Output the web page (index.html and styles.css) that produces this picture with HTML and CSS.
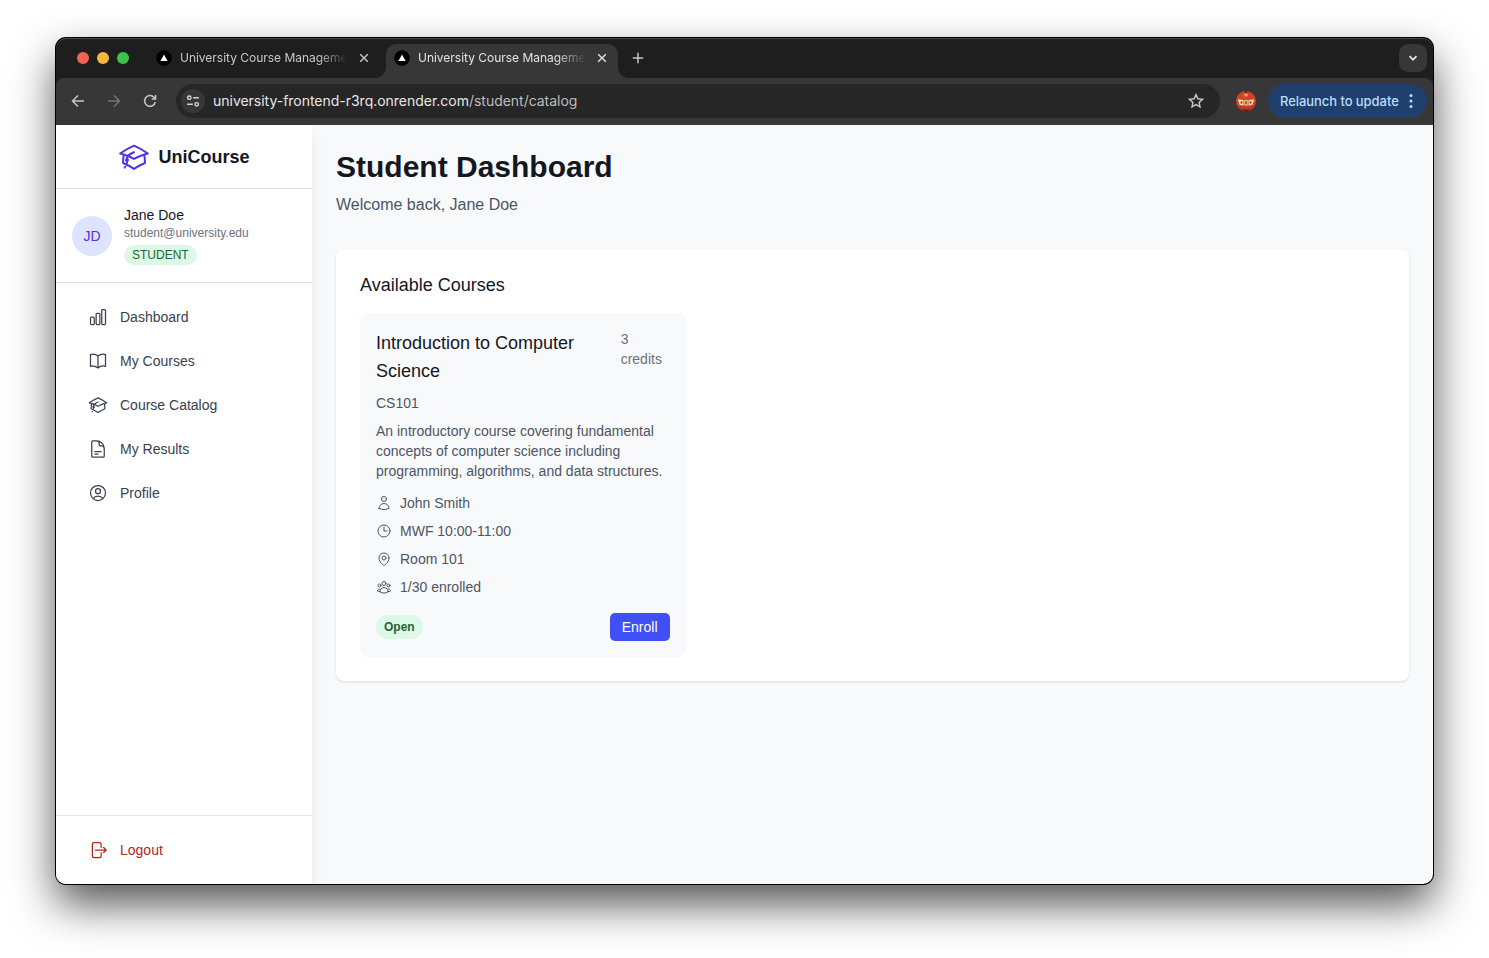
FILE: index.html
```html
<!DOCTYPE html>
<html lang="en">
<head>
<meta charset="utf-8">
<title>University Course Management</title>
<link rel="stylesheet" href="styles.css">
</head>
<body>
<svg class="sprite" aria-hidden="true">
  <symbol id="cap" viewBox="0 0 24 24"><path d="M4.26 10.147a60.438 60.438 0 0 0-.491 6.347A48.62 48.62 0 0 1 12 20.904a48.62 48.62 0 0 1 8.232-4.41 60.46 60.46 0 0 0-.491-6.347m-15.482 0a50.636 50.636 0 0 0-2.658-.813A59.906 59.906 0 0 1 12 3.493a59.903 59.903 0 0 1 10.399 5.84c-.896.248-1.783.52-2.658.814m-15.482 0A50.717 50.717 0 0 1 12 13.489a50.702 50.702 0 0 1 7.74-3.342M6.75 15a.75.75 0 1 0 0-1.5.75.75 0 0 0 0 1.5Zm0 0v-3.675A55.378 55.378 0 0 1 12 8.443m-7.007 11.55A5.981 5.981 0 0 0 6.75 15.75v-1.5"/></symbol>
  <symbol id="close" viewBox="0 0 10 10"><path d="M1.2 1.2 8.8 8.8M8.8 1.2 1.2 8.8"/></symbol>
  <symbol id="favicon" viewBox="0 0 16 16"><circle cx="8" cy="8" r="7.8" fill="#000"/><path d="M8 4.6 11.6 11H4.4Z" fill="#fff"/></symbol>
</svg>
<div class="window">
  <header class="tabs">
    <div class="lights"><i class="red"></i><i class="yellow"></i><i class="green"></i></div>
    <div class="tab">
      <svg class="favicon"><use href="#favicon"/></svg>
      <span class="tab-title">University Course Manageme</span>
      <svg class="tab-close"><use href="#close"/></svg>
    </div>
    <div class="tab active">
      <svg class="favicon"><use href="#favicon"/></svg>
      <span class="tab-title">University Course Manageme</span>
      <svg class="tab-close"><use href="#close"/></svg>
    </div>
    <svg class="plus" viewBox="0 0 12 12"><path d="M6 .8v10.4M.8 6h10.4"/></svg>
    <div class="tab-menu"><svg viewBox="0 0 10 10"><path d="m1.5 3.2 3.5 3.5 3.5-3.5"/></svg></div>
  </header>
  <div class="toolbar">
    <svg class="tool" viewBox="0 0 16 16"><path d="M14 8H2.5M8 2.5 2.5 8 8 13.5"/></svg>
    <svg class="tool dim" viewBox="0 0 16 16"><path d="M2 8h11.5M8 2.5 13.5 8 8 13.5"/></svg>
    <svg class="tool" viewBox="0 0 16 16"><path d="M13.3 9A5.4 5.4 0 1 1 12 4.3l1.4 1.5M13.6 2v4H9.7"/></svg>
    <div class="address">
      <div class="site"><svg viewBox="0 0 14 14"><circle cx="3.3" cy="3.7" r="1.7"/><path d="M7.2 3.7h5.6M1.2 10.3h5.6"/><circle cx="10.7" cy="10.3" r="1.7"/></svg></div>
      <span class="url"><b>university-frontend-r3rq.onrender.com</b>/student/catalog</span>
      <svg class="star" viewBox="0 0 16 16"><path d="m8 1.6 1.9 4.2 4.6.5-3.4 3.1.9 4.5L8 11.6l-4 2.3.9-4.5L1.5 6.3l4.6-.5Z"/></svg>
    </div>
    <svg class="profile" viewBox="0 0 20 20"><circle cx="10" cy="10" r="10" fill="#d5402b"/><path d="M1.5 15.5a10 10 0 0 0 17 0Z" fill="#c03524"/><path d="M5 18.6a10 10 0 0 0 10 0Z" fill="#5c201a"/><path d="M9 0h2v2.5H9Z" fill="#4a2418"/><circle cx="10" cy="4" r="1.8" fill="#f0ad35"/><path d="M1.8 8.5 7.5 9v5.5l-4-.7ZM18.2 8.5 12.5 9v5.5l4-.7Z" fill="#f7dfae"/><path d="M8.2 9h3.6v5.5H8.2Z" fill="#efbc83"/><path d="M4.5 10.5h2v2h-2ZM13.5 10.5h2v2h-2ZM9.3 10.3h1.4v3H9.3Z" fill="#8c3522"/></svg>
    <div class="relaunch"><span>Relaunch to update</span><svg viewBox="0 0 4 16"><circle cx="2" cy="2.5" r="1.5"/><circle cx="2" cy="8" r="1.5"/><circle cx="2" cy="13.5" r="1.5"/></svg></div>
  </div>
  <div class="app">
    <aside class="sidebar">
      <div class="brand"><svg class="icon brand-icon"><use href="#cap"/></svg><span>UniCourse</span></div>
      <div class="user">
        <div class="avatar">JD</div>
        <div class="user-info">
          <div class="user-name">Jane Doe</div>
          <div class="user-email">student@university.edu</div>
          <div class="role">STUDENT</div>
        </div>
      </div>
      <nav class="nav">
        <a class="nav-item"><svg class="icon" viewBox="0 0 24 24"><path d="M3 13.125C3 12.504 3.504 12 4.125 12h2.25c.621 0 1.125.504 1.125 1.125v6.75C7.5 20.496 6.996 21 6.375 21h-2.25A1.125 1.125 0 0 1 3 19.875v-6.75ZM9.75 8.625c0-.621.504-1.125 1.125-1.125h2.25c.621 0 1.125.504 1.125 1.125v11.25c0 .621-.504 1.125-1.125 1.125h-2.25a1.125 1.125 0 0 1-1.125-1.125V8.625ZM16.5 4.125c0-.621.504-1.125 1.125-1.125h2.25C20.496 3 21 3.504 21 4.125v15.75c0 .621-.504 1.125-1.125 1.125h-2.25a1.125 1.125 0 0 1-1.125-1.125V4.125Z"/></svg>Dashboard</a>
        <a class="nav-item"><svg class="icon" viewBox="0 0 24 24"><path d="M12 6.042A8.967 8.967 0 0 0 6 3.75c-1.052 0-2.062.18-3 .512v14.25A8.987 8.987 0 0 1 6 18c2.305 0 4.408.867 6 2.292m0-14.25a8.966 8.966 0 0 1 6-2.292c1.052 0 2.062.18 3 .512v14.25A8.987 8.987 0 0 0 18 18a8.967 8.967 0 0 0-6 2.292m0-14.25v14.25"/></svg>My Courses</a>
        <a class="nav-item"><svg class="icon"><use href="#cap"/></svg>Course Catalog</a>
        <a class="nav-item"><svg class="icon" viewBox="0 0 24 24"><path d="M19.5 14.25v-2.625a3.375 3.375 0 0 0-3.375-3.375h-1.5A1.125 1.125 0 0 1 13.5 7.125v-1.5a3.375 3.375 0 0 0-3.375-3.375H8.25m0 12.75h7.5m-7.5 3H12M10.5 2.25H5.625c-.621 0-1.125.504-1.125 1.125v17.25c0 .621.504 1.125 1.125 1.125h12.75c.621 0 1.125-.504 1.125-1.125V11.25a9 9 0 0 0-9-9Z"/></svg>My Results</a>
        <a class="nav-item"><svg class="icon" viewBox="0 0 24 24"><path d="M17.982 18.725A7.488 7.488 0 0 0 12 15.75a7.488 7.488 0 0 0-5.982 2.975m11.963 0a9 9 0 1 0-11.963 0m11.963 0A8.966 8.966 0 0 1 12 21a8.966 8.966 0 0 1-5.982-2.275M15 9.75a3 3 0 1 1-6 0 3 3 0 0 1 6 0Z"/></svg>Profile</a>
      </nav>
      <div class="side-foot">
        <a class="nav-item logout"><svg class="icon" viewBox="0 0 24 24"><path d="M15.75 9V5.25A2.25 2.25 0 0 0 13.5 3h-6a2.25 2.25 0 0 0-2.25 2.25v13.5A2.25 2.25 0 0 0 7.5 21h6a2.25 2.25 0 0 0 2.25-2.25V15m3 0 3-3m0 0-3-3m3 3H9"/></svg>Logout</a>
      </div>
    </aside>
    <main class="main">
      <h1>Student Dashboard</h1>
      <p class="welcome">Welcome back, Jane Doe</p>
      <section class="panel">
        <h2>Available Courses</h2>
        <div class="grid">
          <article class="course">
            <div class="course-head"><h3>Introduction to Computer Science</h3><span class="credits">3 credits</span></div>
            <p class="code">CS101</p>
            <p class="desc">An introductory course covering fundamental concepts of computer science including programming, algorithms, and data structures.</p>
            <ul class="facts">
              <li><svg class="icon" viewBox="0 0 24 24"><path d="M15.75 6a3.75 3.75 0 1 1-7.5 0 3.75 3.75 0 0 1 7.5 0ZM4.501 20.118a7.5 7.5 0 0 1 14.998 0A17.933 17.933 0 0 1 12 21.75c-2.676 0-5.216-.584-7.499-1.632Z"/></svg>John Smith</li>
              <li><svg class="icon" viewBox="0 0 24 24"><path d="M12 6v6h4.5m4.5 0a9 9 0 1 1-18 0 9 9 0 0 1 18 0Z"/></svg>MWF 10:00-11:00</li>
              <li><svg class="icon" viewBox="0 0 24 24"><path d="M15 10.5a3 3 0 1 1-6 0 3 3 0 0 1 6 0ZM19.5 10.5c0 7.142-7.5 11.25-7.5 11.25S4.5 17.642 4.5 10.5a7.5 7.5 0 1 1 15 0Z"/></svg>Room 101</li>
              <li><svg class="icon" viewBox="0 0 24 24"><path d="M18 18.72a9.094 9.094 0 0 0 3.741-.479 3 3 0 0 0-4.682-2.72m.94 3.198.001.031c0 .225-.012.447-.037.666A11.944 11.944 0 0 1 12 21c-2.17 0-4.207-.576-5.963-1.584A6.062 6.062 0 0 1 6 18.719m12 0a5.971 5.971 0 0 0-.941-3.197m0 0A5.995 5.995 0 0 0 12 12.75a5.995 5.995 0 0 0-5.058 2.772m0 0a3 3 0 0 0-4.681 2.72 8.986 8.986 0 0 0 3.74.477m.94-3.197a5.971 5.971 0 0 0-.94 3.197M15 6.75a3 3 0 1 1-6 0 3 3 0 0 1 6 0Zm6 3a2.25 2.25 0 1 1-4.5 0 2.25 2.25 0 0 1 4.5 0Zm-13.5 0a2.25 2.25 0 1 1-4.5 0 2.25 2.25 0 0 1 4.5 0Z"/></svg>1/30 enrolled</li>
            </ul>
            <div class="course-foot"><span class="status">Open</span><button class="enroll">Enroll</button></div>
          </article>
        </div>
      </section>
    </main>
  </div>
</div>
</body>
</html>
```
FILE: styles.css
```css
* { box-sizing: border-box; margin: 0; padding: 0; }
body {
  width: 1489px; height: 958px; overflow: hidden; background: #fff;
  padding: 38px 56px 74px;
  font-family: "Liberation Sans", Arial, sans-serif; font-size: 14px; line-height: 20px;
}
svg { display: block; flex: none; }
.sprite { position: absolute; width: 0; height: 0; }
.window {
  width: 1377px; height: 846px; border-radius: 10px; overflow: hidden;
  display: flex; flex-direction: column; background: #1e1e1e;
  box-shadow: 0 0 0 1px #000, 0 20px 44px rgba(0, 0, 0, .68);
}
.tabs {
  height: 40px; flex: none; display: flex; align-items: center; padding: 0 6px 0 21px;
  border-radius: 10px 10px 0 0;
  box-shadow: inset 0 1px 0 #484848;
  font-family: Inter, sans-serif; font-size: 12px; color: #c7c7c7;
}
.lights { display: flex; gap: 8px; }
.lights i { width: 12px; height: 12px; border-radius: 50%; }
.red { background: #f26253; }
.yellow { background: #f5b83d; }
.green { background: #3fc24b; }
.tab { width: 232px; height: 34px; margin: 6px 0 0 19px; padding: 0 11px 6px 8px; display: flex; align-items: center; }
.tab.active {
  margin-left: 6px; background: #373737; color: #e3e3e3; border-radius: 10px 10px 0 0; position: relative;
}
.tab.active::before, .tab.active::after {
  content: ""; position: absolute; bottom: 0; width: 10px; height: 10px;
}
.tab.active::before { left: -10px; background: radial-gradient(circle at 0 0, transparent 9.5px, #373737 10px); }
.tab.active::after { right: -10px; background: radial-gradient(circle at 100% 0, transparent 9.5px, #373737 10px); }
.favicon { width: 16px; height: 16px; }
.tab-title {
  width: 170px; margin-left: 8px; margin-right: 9px; white-space: nowrap; letter-spacing: -.02px;
  mask-image: linear-gradient(90deg, #000 138px, transparent 168px);
}
.tab-close { width: 10px; height: 10px; fill: none; stroke: currentColor; stroke-width: 1.4; }
.plus { width: 12px; height: 12px; margin-left: 14px; fill: none; stroke: #c7c7c7; stroke-width: 1.5; }
.tab-menu {
  width: 28px; height: 28px; margin-left: auto; border-radius: 9px; background: #373737;
  display: flex; align-items: center; justify-content: center;
}
.tab-menu svg { width: 10px; height: 10px; fill: none; stroke: #e3e3e3; stroke-width: 1.7; }
.toolbar {
  height: 47px; flex: none; background: #373737; border-radius: 8px 8px 0 0;
  display: flex; align-items: center; padding: 0 6px 1px 14px; font-family: Inter, sans-serif;
}
.tool { width: 16px; height: 16px; margin-right: 20px; fill: none; stroke: #c7c7c7; stroke-width: 1.5; }
.tool.dim { stroke: #757575; }
.address {
  width: 1044px; height: 34px; margin-left: -2px; border-radius: 17px; background: #262626;
  padding: 0 16px 0 5px; display: flex; align-items: center;
}
.site { width: 24px; height: 24px; border-radius: 50%; background: #373737; display: flex; align-items: center; justify-content: center; }
.site svg { width: 14px; height: 14px; fill: none; stroke: #d5d5d5; stroke-width: 1.4; }
.url { margin-left: 8px; font-size: 14px; letter-spacing: -.02px; color: #bdbdbd; }
.url b { font-weight: 400; color: #e6e6e6; }
.star { width: 16px; height: 16px; margin-left: auto; fill: none; stroke: #c7c7c7; stroke-width: 1.4; }
.profile { width: 20px; height: 20px; margin: 0 12px 0 16px; }
.relaunch {
  width: 159px; height: 34px; border-radius: 17px; background: #1f3f6c; color: #b9dcfb; font-size: 13px; font-weight: 500; letter-spacing: -.06px;
  display: flex; align-items: center; justify-content: space-between; padding: 0 14px 0 12px; white-space: nowrap;
}
.relaunch svg { width: 4px; height: 16px; fill: currentColor; }
.app { flex: 1; min-height: 0; display: flex; background: #f8f9fb; }
.icon { width: 20px; height: 20px; fill: none; stroke: currentColor; stroke-width: 1.5; stroke-linecap: round; stroke-linejoin: round; }
.sidebar {
  width: 256px; flex: none; background: #fff; display: flex; flex-direction: column;
  box-shadow: 0 10px 15px -3px rgba(0, 0, 0, .1), 0 4px 6px -4px rgba(0, 0, 0, .1);
}
.brand {
  height: 64px; border-bottom: 1px solid #e0e1e8; display: flex; align-items: center; justify-content: center;
  gap: 8px; font-size: 18px; font-weight: 700; color: #14171f;
}
.brand-icon { width: 32px; height: 32px; color: #5232e4; }
.user { height: 94px; border-bottom: 1px solid #e0e1e8; display: flex; align-items: center; gap: 12px; padding: 16px; }
.avatar {
  width: 40px; height: 40px; border-radius: 50%; background: #dfe4fe; color: #5232e4;
  display: flex; align-items: center; justify-content: center; margin-top: 1px;
}
.user-info { height: 61px; }
.user-name { color: #14171f; }
.user-email { font-size: 12px; line-height: 16px; color: #6b7280; }
.role {
  width: max-content; margin-top: 4px; padding: 2px 8px; border-radius: 10px; background: #dcf9e5;
  color: #256138; font-size: 12px; line-height: 16px;
}
.nav { flex: 1; padding: 16px; display: flex; flex-direction: column; gap: 8px; }
.nav-item { height: 36px; padding: 0 16px; display: flex; align-items: center; gap: 12px; color: #394151; }
.side-foot { border-top: 1px solid #e3e5e8; padding: 16px; }
.logout { color: #b3261a; }
.main { flex: 1; padding: 24px; }
h1 { font-size: 30px; line-height: 36px; color: #14171f; }
.welcome { margin-top: 8px; font-size: 16px; line-height: 24px; color: #4d5564; }
.panel {
  margin-top: 32px; padding: 24px; border-radius: 8px; background: #fff;
  box-shadow: 0 1px 3px rgba(0, 0, 0, .1), 0 1px 2px -1px rgba(0, 0, 0, .1);
}
h2 { font-size: 18px; line-height: 24px; font-weight: 400; color: #14171f; }
.grid { margin-top: 16px; display: grid; grid-template-columns: repeat(3, 1fr); gap: 24px; }
.course { padding: 16px; border-radius: 8px; background: #f8f9fb; color: #4d5564; }
.course-head { display: flex; align-items: flex-start; }
h3 { flex: 1; padding-right: 30px; font-size: 18px; line-height: 28px; font-weight: 400; color: #14171f; }
.credits { width: 49px; color: #6b7280; }
.code { margin-top: 8px; }
.desc { margin-top: 8px; }
.facts { margin-top: 12px; list-style: none; display: grid; gap: 8px; }
.facts li { display: flex; align-items: center; gap: 8px; }
.facts .icon { width: 16px; height: 16px; }
.course-foot { margin-top: 16px; display: flex; align-items: center; justify-content: space-between; }
.status {
  padding: 4px 8px; border-radius: 12px; background: #dcf9e5; color: #256138;
  font-size: 12px; line-height: 16px; font-weight: 700;
}
.enroll {
  width: 60px; height: 28px; border: 0; border-radius: 5px; background: #4150f5; color: #fff;
  font: 14px/20px "Liberation Sans", Arial, sans-serif;
}
```
